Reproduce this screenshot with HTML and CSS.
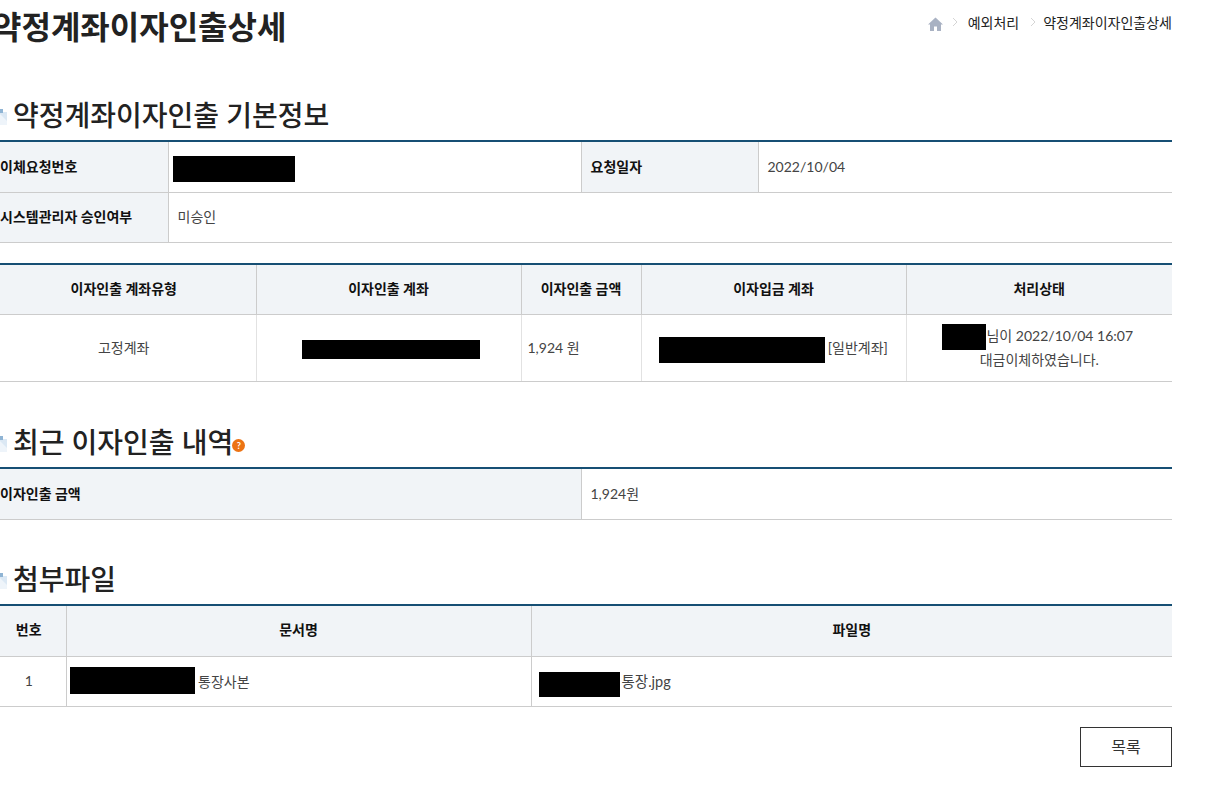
FILE: index.html
```html
<!DOCTYPE html>
<html lang="ko">
<head>
<meta charset="utf-8">
<title>약정계좌이자인출상세</title>
<link rel="stylesheet" href="styles.css">
</head>
<body>
<main class="page">
  <header class="top">
    <h1 class="title">약정계좌이자인출상세</h1>
    <nav class="crumbs">
      <svg class="home" width="15" height="14" viewBox="0 0 15 14"><path d="M7.5 0.5 L15 7.5 H13 V14 H9 V9.5 H6 V14 H2 V7.5 H0 Z" fill="#a9b2c3"/></svg>
      <svg class="chev chev-a" width="6" height="10" viewBox="0 0 6 10"><path d="M1 1 L5 5 L1 9" fill="none" stroke="#d5d5d5"/></svg>
      <span>예외처리</span>
      <svg class="chev" width="6" height="10" viewBox="0 0 6 10"><path d="M1 1 L5 5 L1 9" fill="none" stroke="#d5d5d5"/></svg>
      <span>약정계좌이자인출상세</span>
    </nav>
  </header>

  <h2 class="sec"><svg class="bul" width="16" height="16" viewBox="0 0 16 16"><path d="M0 3 H15 V16 H0 Z" fill="#dbe8f4"/><path d="M8 5 L15 12 V16 H8 Z" fill="#eef4fa"/><path d="M0 0 H11 V4 H0 Z" fill="#8fb4d4"/></svg>약정계좌이자인출 기본정보</h2>
  <table class="tbl">
    <colgroup><col class="c-a"><col class="c-b"><col class="c-c"><col></colgroup>
    <tr class="r-first">
      <th class="lab">이체요청번호</th>
      <td><span class="mask m1"></span></td>
      <th class="lab2">요청일자</th>
      <td>2022/10/04</td>
    </tr>
    <tr>
      <th class="lab">시스템관리자 승인여부</th>
      <td colspan="3">미승인</td>
    </tr>
  </table>

  <table class="tbl tbl-gap">
    <colgroup><col class="d-a"><col class="d-b"><col class="d-c"><col class="d-d"><col></colgroup>
    <tr>
      <th>이자인출 계좌유형</th><th>이자인출 계좌</th><th>이자인출 금액</th><th>이자입금 계좌</th><th>처리상태</th>
    </tr>
    <tr class="r66">
      <td class="ctr">고정계좌</td>
      <td class="ctr"><span class="mask m2"></span></td>
      <td class="nar">1,924 원</td>
      <td class="ctr"><span class="mask m3"></span> [일반계좌]</td>
      <td class="ctr status"><span class="mask m4"></span>님이 2022/10/04 16:07<br>대금이체하였습니다.</td>
    </tr>
  </table>

  <h2 class="sec sec-second"><svg class="bul" width="16" height="16" viewBox="0 0 16 16"><path d="M0 3 H15 V16 H0 Z" fill="#dbe8f4"/><path d="M8 5 L15 12 V16 H8 Z" fill="#eef4fa"/><path d="M0 0 H11 V4 H0 Z" fill="#8fb4d4"/></svg>최근 이자인출 내역<span class="help">?</span></h2>
  <table class="tbl">
    <colgroup><col class="e-a"><col></colgroup>
    <tr class="r-first">
      <th class="lab">이자인출 금액</th>
      <td>1,924원</td>
    </tr>
  </table>

  <h2 class="sec sec-next"><svg class="bul" width="16" height="16" viewBox="0 0 16 16"><path d="M0 3 H15 V16 H0 Z" fill="#dbe8f4"/><path d="M8 5 L15 12 V16 H8 Z" fill="#eef4fa"/><path d="M0 0 H11 V4 H0 Z" fill="#8fb4d4"/></svg>첨부파일</h2>
  <table class="tbl">
    <colgroup><col class="f-a"><col class="f-b"><col></colgroup>
    <tr class="r-head">
      <th>번호</th><th>문서명</th><th>파일명</th>
    </tr>
    <tr class="r-files">
      <td class="ctr">1</td>
      <td class="tight"><span class="mask m5"></span> 통장사본</td>
      <td class="fname"><span class="mask m6"></span>통장.jpg</td>
    </tr>
  </table>

  <div class="actions"><a class="btn">목록</a></div>
</main>
</body>
</html>
```
FILE: styles.css
```css
html, body { margin: 0; padding: 0; background: #fff; overflow: hidden; }
body { height: 790px; font-family: Lato, "Noto Sans CJK KR", sans-serif; color: #333; }
.page { width: 1180px; margin-left: -8px; }
.top { display: flex; justify-content: space-between; align-items: flex-start; height: 95px; }
.title { margin: 4px 0 0; font-size: 32px; line-height: 46px; font-weight: 700; color: #222; }
.crumbs { display: flex; align-items: center; margin-top: 14px; height: 16px; font-size: 14px; color: #222; }
.crumbs .home { margin-right: 9px; margin-top: 3px; }
.crumbs .chev { margin-right: 7px; }
.crumbs .chev-a { margin-right: 10px; }
.crumbs span { margin-right: 11px; }
.crumbs span:last-child { margin-right: 0; }
.sec { display: flex; align-items: center; margin: 0; font-size: 28px; line-height: 40px; height: 45px; padding-bottom: 5px; box-sizing: border-box; font-weight: 500; color: #222; }
.bul { margin-right: 5px; flex: none; margin-top: 4px; }
.sec-second { margin-top: 40px; }
.sec-next { margin-top: 39px; }
.tbl { width: 100%; border-collapse: collapse; table-layout: fixed; border-top: 2px solid #164f74; font-size: 14px; }
.tbl-gap { margin-top: 20px; }
.tbl th, .tbl td { border-bottom: 1px solid #ccc; border-left: 1px solid #ccc; padding: 0 9px 4px; font-size: 14px; height: 45px; }
.tbl th:first-child, .tbl td:first-child { border-left: 0; }
.tbl th { background: #f1f4f7; color: #111; font-weight: 700; text-align: center; }
.tbl th.lab { text-align: left; padding-left: 8px; }
.tbl th.lab2 { text-align: left; }
.tbl td { color: #444; }
.tbl .r-first th, .tbl .r-first td { height: 48px; padding-bottom: 2px; }
.tbl .r-head th { height: 46px; padding-bottom: 4px; }
.tbl .r-files td { height: 47px; padding-bottom: 2px; }
.tbl .r66 td { height: 64px; padding-bottom: 2px; border-left-color: #e2e2e2; }
.tbl .r66 .status { height: 66px; padding-bottom: 0; line-height: 24px; }
.ctr { text-align: center; }
.tbl .nar { padding-left: 6px; padding-right: 6px; }
.tbl .tight { padding-left: 3px; padding-right: 3px; }
.tbl .fname { padding-left: 7px; font-size: 14.5px; }
.mask { display: inline-block; background: #000; vertical-align: baseline; }
.m1 { width: 122px; height: 26px; margin: -26px 0 -10px -5px; }
.m2 { width: 178px; height: 19px; margin: -19px 0 -6px 4px; }
.m3 { width: 166px; height: 26px; margin: -26px -1px -10px 0; }
.m4 { width: 44px; height: 26px; margin: -26px 0 -9px -3px; }
.m5 { width: 125px; height: 27px; margin: -27px 0 -7px; }
.m6 { width: 81px; height: 25px; margin: -25px 2px -10px 0; }
.c-a { width: 176px; } .c-b { width: 413px; } .c-c { width: 177px; }
.d-a { width: 264px; } .d-b { width: 265px; } .d-c { width: 120px; } .d-d { width: 265px; }
.e-a { width: 589px; }
.f-a { width: 74px; } .f-b { width: 465px; }
.help { display: inline-block; width: 13px; height: 13px; margin-left: -1px; border-radius: 50%; background: #ec7314; color: #fff; font-size: 9px; font-weight: 700; line-height: 13px; text-align: center; margin-top: 7px; }
.actions { display: flex; justify-content: flex-end; margin-top: 20px; }
.btn { display: block; width: 90px; height: 38px; border: 1px solid #333; color: #333; font-size: 16px; line-height: 38px; text-align: center; }
```
